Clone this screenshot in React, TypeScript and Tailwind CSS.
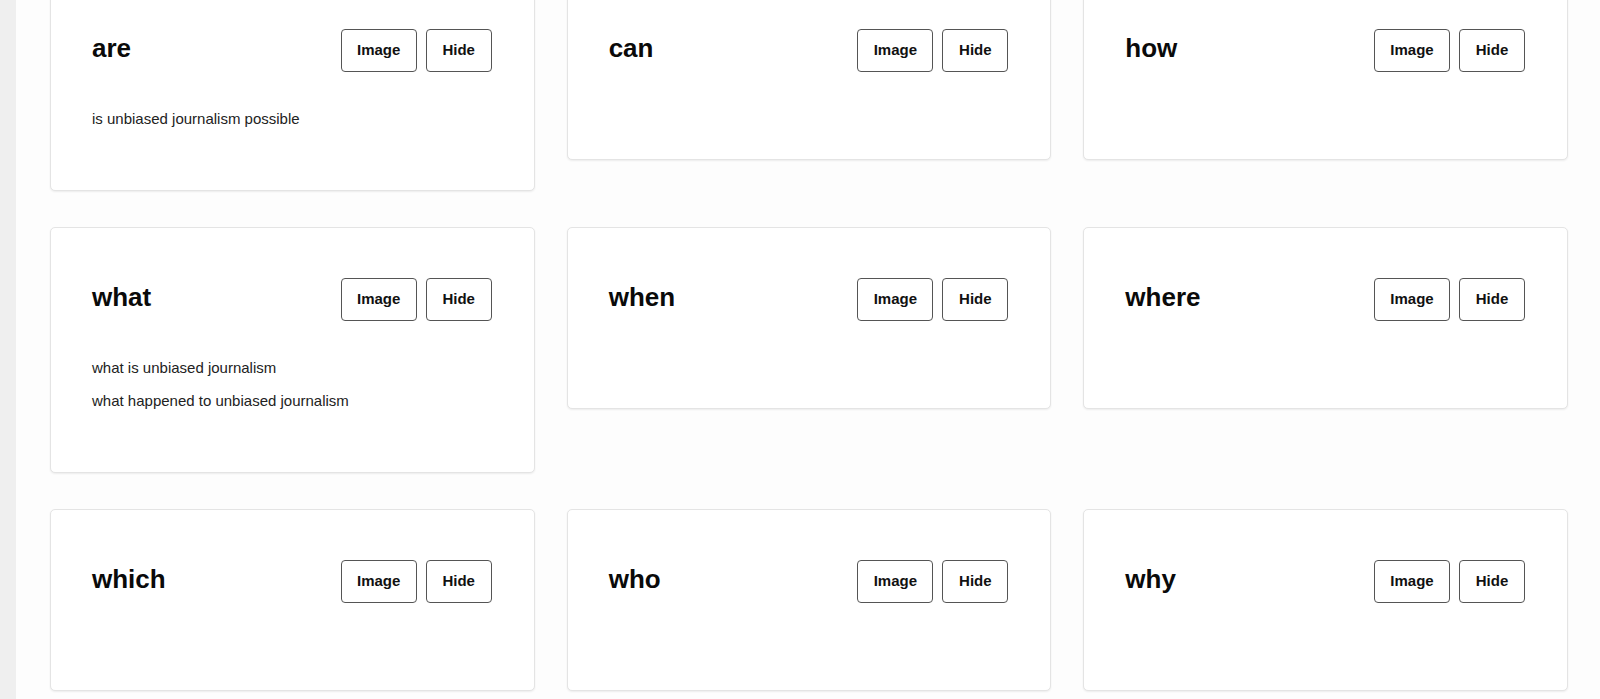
const cards: { word: string; items: string[] }[] = [
  { word: "are", items: ["is unbiased journalism possible"] },
  { word: "can", items: [] },
  { word: "how", items: [] },
  { word: "what", items: ["what is unbiased journalism", "what happened to unbiased journalism"] },
  { word: "when", items: [] },
  { word: "where", items: [] },
  { word: "which", items: [] },
  { word: "who", items: [] },
  { word: "why", items: [] },
];

function QuestionCard({ word, items }: { word: string; items: string[] }) {
  return (
    <div className="bg-white border border-[#e4e4e4] rounded-[5px] shadow-[0_1px_2px_rgba(0,0,0,0.07)] pt-[50px] pb-[57px] pl-[41px] pr-[42px] flex flex-col">
      {/* header: word + actions */}
      <div className="flex items-center justify-between h-[43px]">
        <h2 className="text-[26px] font-bold text-[#0a0a0a] mb-1">{word}</h2>
        <div className="flex items-center gap-[9px]">
          <button className="h-[43px] w-[76px] border border-[#555] rounded-[4px] bg-white text-[15px] font-bold text-[#111]">
            Image
          </button>
          <button className="h-[43px] w-[66px] border border-[#555] rounded-[4px] bg-white text-[15px] font-bold text-[#111]">
            Hide
          </button>
        </div>
      </div>

      {/* suggestions */}
      <ul className={items.length ? "mt-[30px] -mb-[3px]" : "mt-[30px]"}>
        {items.map((s) => (
          <li key={s} className="text-[15px] leading-[33.5px] text-[#222]">
            {s}
          </li>
        ))}
      </ul>
    </div>
  );
}

export default function App() {
  return (
    <div
      className="flex h-[699px] overflow-hidden bg-[#fdfdfd]"
      style={{ fontFamily: '"Liberation Sans", Arial, sans-serif' }}
    >
      {/* left rail */}
      <div className="w-4 shrink-0 bg-[#efefef]" />

      {/* card grid, scrolled slightly */}
      <main className="flex-1 pl-[34px] pr-[32px]">
        <div className="-mt-[22px] grid grid-cols-3 gap-x-8 gap-y-9 items-start">
          {cards.map((c) => (
            <QuestionCard key={c.word} word={c.word} items={c.items} />
          ))}
        </div>
      </main>
    </div>
  );
}
